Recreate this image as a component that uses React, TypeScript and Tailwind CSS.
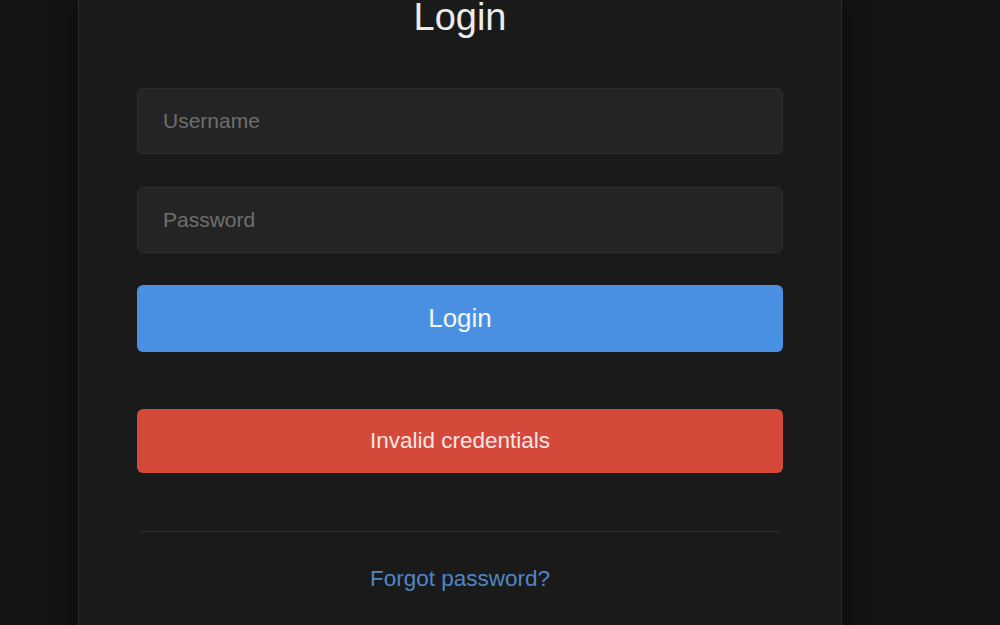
import React from "react";

export default function App() {
  return (
    <div className="min-h-[625px] h-[625px] overflow-hidden bg-[#141414] font-['Liberation_Sans',Arial,sans-serif]">
      <div className="ml-[78px] w-[764px] h-[700px] bg-[#1a1a1a] border-x border-[#2a2a2a] shadow-[0_0_24px_rgba(0,0,0,0.6)] px-[58px]">
        <h1 className="text-center text-[38px] leading-[34px] text-[#ececec]">Login</h1>

        <div className="mt-[54px] flex flex-col gap-[33px]">
          <input
            type="text"
            placeholder="Username"
            className="h-[66px] w-full rounded-md border border-[#2e2e2e] bg-[#242424] px-[25px] text-[21px] text-[#ddd] placeholder:text-[#6f6f6f] outline-none"
          />
          <input
            type="password"
            placeholder="Password"
            className="h-[66px] w-full rounded-md border border-[#2e2e2e] bg-[#242424] px-[25px] text-[21px] text-[#ddd] placeholder:text-[#6f6f6f] outline-none"
          />
        </div>

        <button className="mt-[32px] h-[67px] w-full rounded-md bg-[#4a90e2] text-[26px] text-[#f2f6fb]">
          Login
        </button>

        <div className="mt-[57px] flex h-[64px] items-center justify-center rounded-md bg-[#d5493b] text-[22.5px] text-[#f6e6e4]">
          Invalid credentials
        </div>

        <div className="mt-[58px] mx-[2px] h-px bg-[#2c2c2c]" />

        <div className="mt-[32px] text-center leading-[30px]">
          <a href="#" className="text-[22.5px] text-[#4f86c6]">
            Forgot password?
          </a>
        </div>
      </div>
    </div>
  );
}
